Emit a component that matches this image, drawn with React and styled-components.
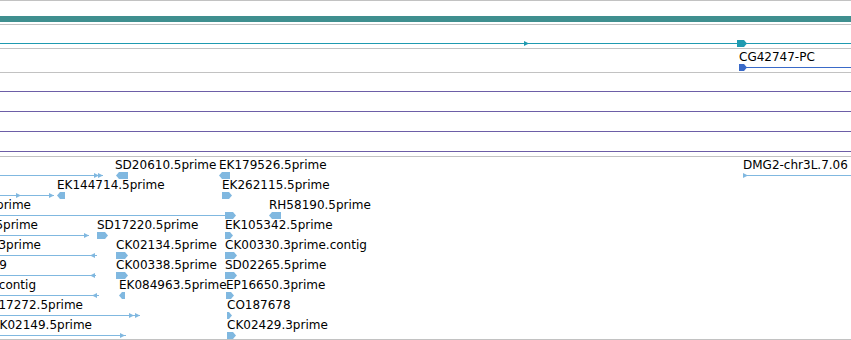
import * as React from "react";
import styled, { createGlobalStyle } from "styled-components";

const GlobalStyle = createGlobalStyle`
  html, body {
    margin: 0;
    padding: 0;
    background: #fff;
    overflow: hidden;
  }
  body {
    font-family: "DejaVu Sans", Verdana, sans-serif;
  }
`;

const GRAY = "#c2c2c2";
const TEAL_BAR = "#3f8f8f";
const TEAL = "#1f9ab0";
const BLUE = "#3a6ac8";
const LIGHT = "#80b8e0";
const PURPLE = "#6d5ea7";

const Browser = styled.div`
  width: 851px;
  height: 340px;
  display: flex;
  flex-direction: column;
  border-top: 1px solid ${GRAY};
  box-sizing: border-box;
  overflow: hidden;
`;

const Track = styled.div`
  position: relative;
  box-sizing: border-box;
  height: ${(p) => p.$height}px;
  flex: none;
  border-bottom: 1px solid ${GRAY};
  overflow: hidden;
  display: flex;
  flex-direction: column;
  padding-top: ${(p) => p.$pad || 0}px;
  gap: ${(p) => p.$gap || 0}px;
`;

const Bar = styled.div`
  height: 6px;
  flex: none;
  background: ${TEAL_BAR};
`;

const Rule = styled.div`
  height: 1px;
  flex: none;
  background: ${(p) => p.$color};
`;

const Line = styled.div`
  position: absolute;
  top: ${(p) => p.$y}px;
  left: ${(p) => p.$x1}px;
  width: ${(p) => p.$x2 - p.$x1}px;
  height: 1px;
  background: ${(p) => p.$color};
`;

const Glyph = styled.svg`
  position: absolute;
  top: ${(p) => p.$top}px;
  left: ${(p) => p.$left}px;
  display: block;
  overflow: visible;
`;

const Label = styled.span`
  position: absolute;
  top: ${(p) => p.$y}px;
  left: ${(p) => p.$x}px;
  transform: ${(p) => (p.$end ? "translateX(-100%)" : "none")};
  font-family: "DejaVu Sans", Verdana, sans-serif;
  font-size: 12px;
  line-height: 14px;
  color: #000;
  white-space: nowrap;
`;

function Head({ x, y, dir, color }) {
  const pts = dir === "r" ? "0,0 5,2.5 0,5" : "5,0 0,2.5 5,5";
  return (
    <Glyph $left={x} $top={y - 2} width={5} height={5}>
      <polygon points={pts} fill={color} />
    </Glyph>
  );
}

function Block({ x, y, w, dir, color }) {
  const pts =
    dir === "r"
      ? `0,0 ${w - 3},0 ${w},3.5 ${w - 3},7 0,7`
      : `3,0 ${w},0 ${w},7 3,7 0,3.5`;
  return (
    <Glyph $left={x} $top={y - 3} width={w} height={7}>
      <polygon points={pts} fill={color} />
    </Glyph>
  );
}

function Feature({ item, y, color }) {
  switch (item.t) {
    case "line":
      return <Line $x1={item.x1} $x2={item.x2} $y={y} $color={color} />;
    case "head":
      return <Head x={item.x} y={y} dir={item.dir} color={color} />;
    case "block":
      return <Block x={item.x} y={y} w={item.w} dir={item.dir} color={color} />;
    case "label":
      return (
        <Label $x={item.x} $y={y - 17} $end={item.end}>
          {item.text}
        </Label>
      );
    default:
      return null;
  }
}

const estRows = [
  [
    { t: "line", x1: 0, x2: 103 },
    { t: "head", x: 94, dir: "r" },
    { t: "head", x: 98, dir: "r" },
    { t: "label", x: 115, text: "SD20610.5prime" },
    { t: "block", x: 116, w: 12, dir: "l" },
    { t: "label", x: 219, text: "EK179526.5prime" },
    { t: "block", x: 219, w: 11, dir: "l" },
    { t: "label", x: 743, text: "DMG2-chr3L.7.06" },
    { t: "line", x1: 743, x2: 851 },
    { t: "head", x: 743, dir: "r" },
  ],
  [
    { t: "line", x1: 0, x2: 54 },
    { t: "head", x: 16, dir: "r" },
    { t: "head", x: 49, dir: "r" },
    { t: "label", x: 57, text: "EK144714.5prime" },
    { t: "block", x: 57, w: 8, dir: "l" },
    { t: "label", x: 222, text: "EK262115.5prime" },
    { t: "block", x: 222, w: 10, dir: "r" },
  ],
  [
    { t: "label", x: 31, end: true, text: "LD21391.5prime" },
    { t: "line", x1: 0, x2: 226 },
    { t: "block", x: 225, w: 11, dir: "r" },
    { t: "label", x: 269, text: "RH58190.5prime" },
    { t: "block", x: 269, w: 12, dir: "l" },
  ],
  [
    { t: "label", x: 38, end: true, text: "GH07465.5prime" },
    { t: "line", x1: 0, x2: 89 },
    { t: "head", x: 84, dir: "r" },
    { t: "label", x: 97, text: "SD17220.5prime" },
    { t: "block", x: 97, w: 11, dir: "r" },
    { t: "label", x: 225, text: "EK105342.5prime" },
    { t: "block", x: 225, w: 8, dir: "r" },
  ],
  [
    { t: "label", x: 41, end: true, text: "CK01803.3prime" },
    { t: "line", x1: 0, x2: 97 },
    { t: "head", x: 90, dir: "l" },
    { t: "label", x: 116, text: "CK02134.5prime" },
    { t: "block", x: 116, w: 12, dir: "r" },
    { t: "label", x: 225, text: "CK00330.3prime.contig" },
    { t: "block", x: 225, w: 12, dir: "r" },
  ],
  [
    { t: "label", x: 7, end: true, text: "CO181729" },
    { t: "line", x1: 0, x2: 96 },
    { t: "head", x: 90, dir: "l" },
    { t: "label", x: 116, text: "CK00338.5prime" },
    { t: "block", x: 116, w: 12, dir: "r" },
    { t: "label", x: 225, text: "SD02265.5prime" },
    { t: "block", x: 225, w: 12, dir: "r" },
  ],
  [
    { t: "label", x: 36, end: true, text: "CK00417.3prime contig" },
    { t: "line", x1: 0, x2: 99 },
    { t: "head", x: 92, dir: "l" },
    { t: "label", x: 119, text: "EK084963.5prime" },
    { t: "block", x: 119, w: 6, dir: "l" },
    { t: "label", x: 226, text: "EP16650.3prime" },
    { t: "block", x: 226, w: 8, dir: "r" },
  ],
  [
    { t: "label", x: 83, end: true, text: "SD17272.5prime" },
    { t: "line", x1: 0, x2: 140 },
    { t: "head", x: 129, dir: "r" },
    { t: "head", x: 135, dir: "r" },
    { t: "label", x: 227, text: "CO187678" },
    { t: "block", x: 227, w: 5, dir: "r" },
  ],
  [
    { t: "label", x: 92, end: true, text: "CK02149.5prime" },
    { t: "line", x1: 0, x2: 126 },
    { t: "head", x: 120, dir: "r" },
    { t: "label", x: 227, text: "CK02429.3prime" },
    { t: "block", x: 227, w: 9, dir: "r" },
  ],
];

const geneItems = [
  { t: "line", x1: 0, x2: 851 },
  { t: "head", x: 524, dir: "r" },
  { t: "block", x: 737, w: 10, dir: "r" },
];

const transcriptItems = [
  { t: "label", x: 739, text: "CG42747-PC" },
  { t: "line", x1: 739, x2: 851 },
  { t: "block", x: 739, w: 8, dir: "r" },
];

export default function App() {
  return (
    <>
      <GlobalStyle />
      <Browser>
        <Track $height={24} $pad={15}>
          <Bar />
        </Track>
        <Track $height={24}>
          {geneItems.map((it, i) => (
            <Feature key={i} item={it} y={18} color={TEAL} />
          ))}
        </Track>
        <Track $height={24}>
          {transcriptItems.map((it, i) => (
            <Feature key={i} item={it} y={18} color={BLUE} />
          ))}
        </Track>
        <Track $height={84} $pad={18} $gap={19}>
          {[0, 1, 2, 3].map((i) => (
            <Rule key={i} $color={PURPLE} />
          ))}
        </Track>
        <Track $height={183}>
          {estRows.map((row, r) =>
            row.map((it, i) => (
              <Feature
                key={`${r}-${i}`}
                item={it}
                y={18 + r * 20}
                color={LIGHT}
              />
            ))
          )}
        </Track>
      </Browser>
    </>
  );
}
